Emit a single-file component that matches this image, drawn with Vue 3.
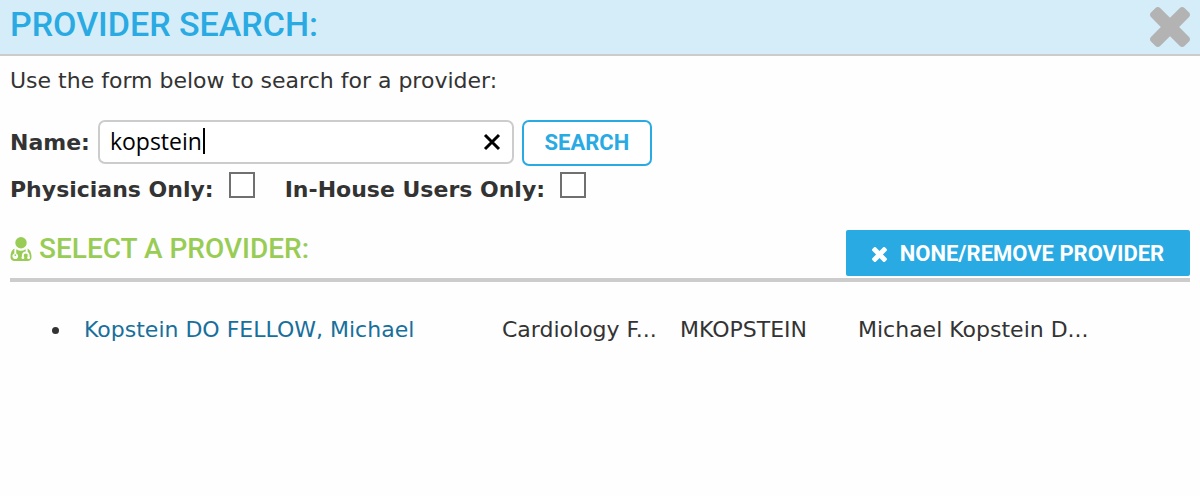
<template>
  <section class="provider-dialog">
    <header class="dialog-header">
      <h1>PROVIDER SEARCH:</h1>
      <button type="button" class="close" aria-label="Close">
        <svg viewBox="302 366 1188 1188"><path :d="timesIcon" /></svg>
      </button>
    </header>

    <main class="dialog-body">
      <p class="intro">Use the form below to search for a provider:</p>

      <form @submit.prevent>
        <div class="name-row">
          <label for="name">Name:</label>
          <div class="search-field">
            <input id="name" v-model="name" type="text" autocomplete="off" spellcheck="false" />
            <span class="caret"></span>
            <button type="button" class="clear" aria-label="Clear name" @click="name = ''">
              <svg viewBox="0 0 18 18"><path d="M2 2L16 16M16 2L2 16" /></svg>
            </button>
          </div>
          <button type="submit" class="search">SEARCH</button>
        </div>
        <div class="filter-row">
          <label for="physicians">Physicians Only:</label>
          <input id="physicians" v-model="physiciansOnly" type="checkbox" />
          <label for="in-house">In-House Users Only:</label>
          <input id="in-house" v-model="inHouseOnly" type="checkbox" />
        </div>
      </form>

      <div class="select-bar">
        <h2>
          <svg viewBox="192 128 1408 1612"><path :d="doctorIcon" /></svg>
          SELECT A PROVIDER:
        </h2>
        <button type="button" class="remove">
          <svg viewBox="302 366 1188 1188"><path :d="timesIcon" /></svg>
          NONE/REMOVE PROVIDER
        </button>
      </div>

      <ul class="results">
        <li v-for="p in providers" :key="p.username">
          <div class="result">
            <a href="#">{{ p.name }}</a>
            <span>{{ p.specialty }}</span>
            <span>{{ p.username }}</span>
            <span>{{ p.description }}</span>
          </div>
        </li>
      </ul>
    </main>
  </section>
</template>

<script setup>
import { ref } from 'vue'

const name = ref('kopstein')
const physiciansOnly = ref(false)
const inHouseOnly = ref(false)

const providers = [
  {
    name: 'Kopstein DO FELLOW, Michael',
    specialty: 'Cardiology F...',
    username: 'MKOPSTEIN',
    description: 'Michael Kopstein D...',
  },
]

const timesIcon =
  'M1490 1322q0 40-28 68l-136 136q-28 28-68 28t-68-28l-294-294-294 294q-28 28-68 28t-68-28l-136-136q-28-28-28-68t28-68l294-294-294-294q-28-28-28-68t28-68l136-136q28-28 68-28t68 28l294 294 294-294q28-28 68-28t68 28l136 136q28 28 28 68t-28 68l-294 294 294 294q28 28 28 68z'

const doctorIcon =
  'M576 1344q0 26-19 45t-45 19-45-19-19-45 19-45 45-19 45 19 19 45zm1024 137q0 121-73 190t-194 69h-874q-121 0-194-69t-73-190q0-68 5.5-131t24-138 47.5-132.5 81-103 120-60.5q-22 52-22 120v203q-58 20-93 70t-35 111q0 80 56 136t136 56 136-56 56-136q0-61-35.5-111t-92.5-70v-203q0-62 25-93 132 104 295 104t295-104q25 31 25 93v64q-106 0-181 75t-75 181v89q-32 29-32 71 0 40 28 68t68 28 68-28 28-68q0-42-32-71v-89q0-52 38-90t90-38 90 38 38 90v89q-32 29-32 71 0 40 28 68t68 28 68-28 28-68q0-42-32-71v-89q0-68-34.5-127.5t-93.5-93.5q0-10 .5-42.5t0-48-2.5-41.5-7-47-13-40q68 15 120 60.5t81 103 47.5 132.5 24 138 5.5 131zm-320-969q0 159-112.5 271.5t-271.5 112.5-271.5-112.5-112.5-271.5 112.5-271.5 271.5-112.5 271.5 112.5 112.5 271.5z'
</script>

<style>
body {
  margin: 0;
  background: #fefefe;
}
</style>

<style scoped>
* {
  box-sizing: border-box;
}

.provider-dialog {
  color: #333;
  font: 22px/28px "DejaVu Sans", Verdana, sans-serif;
}

h1,
h2,
p {
  margin: 0;
}

svg {
  display: block;
  fill: currentColor;
}

button {
  padding: 0;
  border: 0;
  background: none;
  cursor: pointer;
}

.dialog-header {
  display: flex;
  align-items: center;
  justify-content: space-between;
  height: 56px;
  padding: 0 10px;
  border-bottom: 2px solid #ccc;
  background: #d5edf8;
}

h1 {
  padding-bottom: 6px;
  color: #29aae3;
  font: 500 34px/40px Roboto, sans-serif;
}

.close {
  color: #b3b3b3;
}

.close svg {
  width: 40px;
  height: 40px;
}

.dialog-body {
  padding: 10px;
}

.intro {
  padding-top: 1px;
}

.name-row {
  display: flex;
  align-items: center;
  gap: 8px;
  margin-top: 25px;
}

label {
  font-weight: 700;
}

.search-field {
  position: relative;
  flex: 0 1 416px;
  padding-bottom: 2px;
}

.search-field input {
  display: block;
  width: 100%;
  height: 44px;
  padding: 0 44px 2px 10px;
  border: 2px solid #ccc;
  border-radius: 7px;
  outline: none;
  background: #fff;
  color: #000;
  font: 23px/38px "Open Sans", sans-serif;
}

.caret {
  position: absolute;
  top: 8px;
  left: 105px;
  width: 2px;
  height: 26px;
  background: #000;
}

.clear {
  position: absolute;
  top: 13px;
  right: 13px;
  color: #000;
}

.clear svg {
  width: 18px;
  height: 18px;
  stroke: currentColor;
  stroke-width: 3;
}

.search {
  width: 130px;
  height: 46px;
  border: 2px solid #29aae3;
  border-radius: 7px;
  background: #fff;
  color: #29aae3;
  font: 700 22px/40px Roboto, sans-serif;
}

.filter-row {
  display: flex;
  align-items: center;
  padding-top: 6px;
}

.filter-row input {
  appearance: none;
  width: 26px;
  height: 26px;
  margin: 0 30px 10px 15px;
  border: 2px solid #707070;
  background: #fff;
}

.select-bar {
  display: flex;
  align-items: center;
  justify-content: space-between;
  margin-top: 22px;
  padding-bottom: 2px;
  border-bottom: 4px solid #ccc;
}

h2 {
  display: flex;
  align-items: center;
  gap: 7px;
  padding-bottom: 8px;
  color: #9c5;
  font: 500 28px/32px Roboto, sans-serif;
}

h2 svg {
  width: 22px;
  height: 24px;
}

.remove {
  display: flex;
  align-items: center;
  justify-content: center;
  gap: 13px;
  min-width: 344px;
  height: 46px;
  padding: 2px 20px 0;
  border-radius: 2px;
  background: #29aae3;
  color: #fff;
  font: 700 22px/40px Roboto, sans-serif;
}

.remove svg {
  width: 15px;
  height: 15px;
}

.results {
  margin: 34px 0 0;
  padding-left: 62px;
}

.results li {
  padding-left: 12px;
}

.result {
  display: grid;
  grid-template-columns: 418px 178px 178px 1fr;
}

.result a {
  color: #176f9c;
  text-decoration: none;
}
</style>
